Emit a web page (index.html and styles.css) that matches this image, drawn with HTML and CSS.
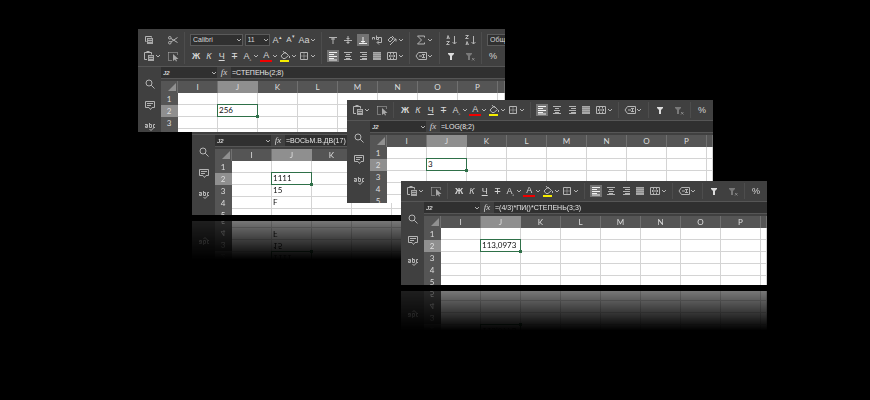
FILE: index.html
```html
<!DOCTYPE html>
<html lang="ru">
<head>
<meta charset="utf-8">
<title>Формулы</title>
<link rel="stylesheet" href="styles.css">
</head>
<body>
<svg class="sprite" aria-hidden="true">
  <symbol id="copy" viewBox="0 0 12 12"><path d="M3.500 7.500h-1v-5h6v1"/><path class="solid" d="M4 4h6v6H4z"/><path class="cut" d="M5 5.500h4M5 7.500h4"/></symbol>
  <symbol id="paste" viewBox="0 0 12 12"><path d="M4 9.500H1.500v-7h7v2M3.500 1.500h3"/><path class="solid" d="M5 5h6v6H5z"/><path class="cut" d="M6 6.500h4M6 8.500h4"/></symbol>
  <symbol id="scissors" viewBox="0 0 12 12"><path d="M4 4.500l6.500 4M4 8l6.500-4.500"/><circle cx="2.800" cy="3.800" r="1.300"/><circle cx="2.800" cy="8.700" r="1.300"/></symbol>
  <symbol id="pick" viewBox="0 0 12 12"><path class="dash" d="M1.500 2.500h9v3M1.500 2.500v8h4"/><path class="solid" d="M6 4v7l2-1.500 1 2 1-.5-1-2h2.500z"/></symbol>
  <symbol id="chevron" viewBox="0 0 6 6"><path d="M1 2l2 2 2-2"/></symbol>
  <symbol id="fill" viewBox="0 0 12 12"><path d="M2 6l4-4 3.500 3.500-3.500 3H4zM4 1l2.500 3M10.500 6v2"/><path class="yellow" d="M1 10h9v2H1z"/></symbol>
  <symbol id="borders" viewBox="0 0 12 12"><path d="M2.500 2.500h7v7h-7z"/><path class="dim" d="M6 3v6M3 6h6"/></symbol>
  <symbol id="top" viewBox="0 0 12 12"><path d="M2 3.500h8M4 5h4M6 10V4" /></symbol>
  <symbol id="middle" viewBox="0 0 12 12"><path d="M2 6.500h8M6 2v8M4.500 4.500h3M4.500 8.500h3"/></symbol>
  <symbol id="bottom" viewBox="0 0 12 12"><path d="M2 9.500h8M6 3v6M4 7.500h4"/></symbol>
  <symbol id="wrap" viewBox="0 0 12 12"><path d="M1.500 5.500v-2h2v2M5.500 1.500v4h2v-2h-2M7.500 3.500h3v5h-4M8 6.500l-2 2 2 2"/></symbol>
  <symbol id="turn" viewBox="0 0 12 12"><path d="M2 6l3-3 2 2-3 3zM6 2l2 2M4 11l6-6M7.500 5H10v2.500"/></symbol>
  <symbol id="left" viewBox="0 0 12 12"><path d="M2 2.500h8M2 4.500h5M2 6.500h8M2 8.500h5M2 10h8"/></symbol>
  <symbol id="center" viewBox="0 0 12 12"><path d="M2 2.500h8M4 4.500h4M3 6.500h6M4 8.500h4M2 9.500h8"/></symbol>
  <symbol id="right" viewBox="0 0 12 12"><path d="M3 2.500h7M5 4.500h5M3 6.500h7M5 8.500h5M3 9.500h7"/></symbol>
  <symbol id="justify" viewBox="0 0 12 12"><path class="solid" d="M2 2h8v8H2z"/><path class="faint" d="M2 3.500h8M2 5.500h8M2 7.500h8"/></symbol>
  <symbol id="merge" viewBox="0 0 12 12"><path d="M1.500 2.500h9v7h-9zM4.500 2v2M7.500 2v2M4.500 8v2M7.500 8v2M3 6h6M4.500 4.500L3 6l1.500 1.500M7.500 4.500L9 6 7.500 7.500"/></symbol>
  <symbol id="sum" viewBox="0 0 12 12"><path d="M9.500 3.500v-1.500H2.500l4 4-4 4h7V8.500"/></symbol>
  <symbol id="tag" viewBox="0 0 12 12"><path d="M3.500 2.500h8v7h-8L1 6zM4 6h3M7 4.500h3M8.500 4.500v3M7 7.500h3"/></symbol>
  <symbol id="az" viewBox="0 0 12 12"><path d="M2 5l1-3.500L4.500 5M2 4h2M1.500 7.500h3l-3 3h3M9.500 2v8M7.500 8l2 2 2-2"/></symbol>
  <symbol id="za" viewBox="0 0 12 12"><path d="M1.500 1.500h3l-3 3h3M2 11l1-3.500L4.500 11M2 10h2M9.500 2v8M7.500 8l2 2 2-2"/></symbol>
  <symbol id="filter" viewBox="0 0 12 12"><path class="bright" d="M3 3h6v1L7 6v4H5V6L3 4z"/></symbol>
  <symbol id="unfilter" viewBox="0 0 12 12"><path class="solid dim" d="M2 3h6v1L6 6v4H4V6L2 4z"/><path class="dim" d="M8 8l2.500 2.500M10.500 8L8 10.500"/></symbol>
  <symbol id="search" viewBox="0 0 12 12"><circle cx="5" cy="5" r="3"/><path d="M7.200 7.200L10.500 10.500"/></symbol>
  <symbol id="comment" viewBox="0 0 12 12"><path d="M1.500 2.500h9v6H8l-1.500 2-1.500-2H1.500zM3 4.500h6M3 6.500h4"/></symbol>
  <symbol id="spell" viewBox="0 0 12 12"><path d="M1 4.500h2.500v3h-2v-1.500h2M5.500 3v4.500h2v-3h-2M11 4.500H9.500v3H11M5.500 9l1.500 1.500 3.500-3.500"/></symbol>
</svg>
<main class="stage" id="stage"></main>
<script src="app.js"></script>
</body>
</html>
```
FILE: styles.css
```css
* { box-sizing: border-box; }

body {
  margin: 0;
  background: #000;
  font: 7px/10px "Liberation Sans", Arial, sans-serif;
  color: #d6d6d6;
}

button, input, select {
  font: inherit;
  color: inherit;
  border: 0;
  border-radius: 0;
  margin: 0;
  padding: 0;
  background: none;
}

.sprite { position: absolute; width: 0; height: 0; }

.stage { position: relative; min-height: 100vh; overflow: hidden; }

.window {
  position: absolute;
  width: 42.1%;
  overflow: hidden;
  display: flex;
  flex-direction: column;
  background: #404040;
}
.power { left: 138px; top: 29px; height: 103px; width: 42.2%; }
.binary { left: 192px; top: 114px; height: 101px; }
.log { left: 347px; top: 100px; height: 103px; }
.sphere { left: 401px; top: 181px; height: 104px; }
.mirrored { -webkit-box-reflect: below 6px linear-gradient(transparent 62%, rgba(0, 0, 0, 0.47)); }

.icon {
  flex: none;
  width: 12px;
  height: 12px;
  fill: none;
  stroke: #b4b4b4;
  stroke-width: 1;
}
.chevron { width: 6px; height: 6px; }
.solid { fill: #a8a8a8; stroke: none; }
.bright { fill: #dcdcdc; stroke: none; }
.dim { opacity: 0.55; }
.faint { stroke: #8c8c8c; }
.cut { stroke: #606060; }
.dash { stroke-dasharray: 1 1; }
.yellow { fill: #f5ec00; stroke: none; }

.toolbar { flex: none; display: flex; padding: 2px 0; border-bottom: 1px solid #565656; }
.double { padding-top: 3px; }
.group { flex: none; padding: 0 5px; border-right: 1px solid #4d4d4d; }
.group:last-child { border: 0; }
.clipboard { width: 47px; }
.text { width: 137px; }
.align { width: 88px; }
.insert { width: 30px; }
.sort { width: 42px; }
.row { display: flex; align-items: center; justify-content: space-between; height: 16px; }

.tool { flex: none; display: flex; align-items: center; height: 12px; }
.tool.active { background: #737373; }
.tool.active .icon { stroke: #f0f0f0; }
.glyph { width: 12px; font-size: 9px; line-height: 12px; text-align: center; white-space: nowrap; }
.glyph sup, .glyph sub { font-size: 5px; line-height: 0; }
.bold { font-weight: bold; }
.italic { font-style: italic; }
.under { text-decoration: underline; }
.strike { text-decoration: line-through; }
.color { border-bottom: 2px solid #f00000; line-height: 10px; }
.small { font-size: 8px; }

.picker { display: grid; align-items: center; height: 12px; background: #303030; border: 1px solid #5a5a5a; }
.picker select { grid-area: 1 / 1; width: 100%; height: 10px; padding-left: 2px; appearance: none; }
.picker .chevron { grid-area: 1 / 1; justify-self: end; pointer-events: none; }
.family { width: 53px; }
.size { width: 25px; }
.format { width: 53px; }

.body { flex: 1; display: flex; min-height: 0; }
.side { flex: none; width: 23px; display: flex; flex-direction: column; align-items: center; gap: 9px; padding-top: 11px; }
.work { flex: 1; min-width: 0; }

.formula { display: flex; height: 12px; margin-bottom: 2px; border-bottom: 1px solid #565656; background: #303030; }
.name { display: flex; align-items: center; width: 56px; }
.name input { flex: 1; min-width: 0; padding-left: 2px; font-size: 6px; font-style: italic; font-weight: bold; }
.fx { width: 14px; background: #404040; font: italic 9px/11px "Liberation Serif", serif; text-align: center; }
.expression { flex: 1; min-width: 0; padding-left: 1px; color: #e6e6e6; }

.sheet {
  width: 100%;
  table-layout: fixed;
  border-collapse: separate;
  border-spacing: 0;
  background: #fff;
  color: #111;
  font: 8px/11px Lato, sans-serif;
}
.sheet th {
  height: 12px;
  padding: 0;
  font-weight: normal;
  color: #dedede;
  background: #555;
  border-right: 1px solid #707070;
}
.sheet tbody th { border-right-color: #555; }
.sheet th.current { background: #8f8f8f; border-color: #8f8f8f; }
.sheet .stub { width: 17px; }
.sheet .column { width: 40px; }
.corner { display: block; width: 8px; height: 8px; margin-left: 7px; background: #909090; clip-path: polygon(100% 0, 100% 100%, 0 100%); }
.sheet td {
  height: 12px;
  padding: 0 0 0 1px;
  border-right: 1px solid #d4d4d4;
  border-bottom: 1px solid #d4d4d4;
  white-space: nowrap;
}
.sheet td.selected { position: relative; }
.selected::before { content: ""; position: absolute; inset: -1px; border: 1px solid #2f7049; }
.selected::after { content: ""; position: absolute; right: -2px; bottom: -2px; width: 3px; height: 3px; background: #2f7049; }
```
FILE: app.js
```js
const windows = [
  { kind: "binary mirrored", formula: "=ВОСЬМ.В.ДВ(17)", values: ["1111", "15", "F"] },
  { kind: "power", formula: "=СТЕПЕНЬ(2;8)", values: ["256"], full: true },
  { kind: "log", formula: "=LOG(8;2)", values: ["3"] },
  { kind: "sphere mirrored", formula: "=(4/3)*ПИ()*СТЕПЕНЬ(3;3)", values: ["113,0973"] },
];
const columns = ["I", "J", "K", "L", "M", "N", "O", "P"];

const svg = (id, cls = "") => `<svg class="icon ${cls}" aria-hidden="true"><use href="#${id}"/></svg>`;
const chevron = svg("chevron", "chevron");
const tool = (id, label, menu, cls = "") =>
  `<button class="tool ${cls}" aria-label="${label}">${svg(id)}${menu ? chevron : ""}</button>`;
const glyph = (text, cls, label, menu) =>
  `<button class="tool" aria-label="${label}"><span class="glyph ${cls}">${text}</span>${menu ? chevron : ""}</button>`;
const picker = (cls, label, value) =>
  `<span class="picker ${cls}"><select aria-label="${label}"><option>${value}</option></select>${chevron}</span>`;

const groups = [
  ["clipboard",
    tool("copy", "Копировать") + tool("scissors", "Вырезать"),
    tool("paste", "Вставить", true) + tool("pick", "Выделить")],
  ["text",
    picker("family", "Шрифт", "Calibri") + picker("size", "Размер", "11") +
    glyph("A<sup>▴</sup>", "", "Крупнее") + glyph("A<sup>▾</sup>", "small", "Мельче") + glyph("Aa", "", "Регистр", true),
    glyph("Ж", "bold", "Полужирный") + glyph("К", "italic", "Курсив") + glyph("Ч", "under", "Подчёркнутый") +
    glyph("Т", "strike", "Зачёркнутый") + glyph("A<sub>▫</sub>", "", "Индекс", true) +
    glyph("A", "color", "Цвет шрифта", true) + tool("fill", "Заливка", true) + tool("borders", "Границы", true)],
  ["align",
    tool("top", "По верху") + tool("middle", "По середине") + tool("bottom", "По низу", false, "active") +
    tool("wrap", "Перенос") + tool("turn", "Ориентация", true),
    tool("left", "Влево", false, "active") + tool("center", "По центру") + tool("right", "Вправо") +
    tool("justify", "По ширине") + tool("merge", "Объединить", true)],
  ["insert", tool("sum", "Сумма", true), tool("tag", "Имена", true)],
  ["sort",
    tool("az", "По возрастанию") + tool("za", "По убыванию"),
    tool("filter", "Фильтр") + tool("unfilter", "Очистить фильтр")],
  ["number", picker("format", "Формат", "Общий"), glyph("%", "", "Процент")],
];

const toolbar = (full) => `<div class="toolbar ${full ? "double" : ""}">${groups.map(([name, upper, lower]) =>
  `<div class="group ${name}">${full ? `<div class="row">${upper}</div>` : ""}<div class="row">${lower}</div></div>`
).join("")}</div>`;

const sheet = (values) => `<table class="sheet"><thead><tr>
  <th class="stub"><span class="corner"></span></th>
  ${columns.map((c) => `<th class="column ${c === "J" ? "current" : ""}">${c}</th>`).join("")}<th></th></tr></thead>
  <tbody>${[1, 2, 3, 4, 5].map((n) => `<tr><th class="${n === 2 ? "current" : ""}">${n}</th>${
    columns.map((c) => `<td class="${c === "J" && n === 2 ? "selected" : ""}">${c === "J" ? values[n - 2] || "" : ""}</td>`).join("")
  }<td></td></tr>`).join("")}</tbody></table>`;

document.getElementById("stage").innerHTML = windows.map((w) => `<section class="window ${w.kind}">
  ${toolbar(w.full)}
  <div class="body">
    <nav class="side">${tool("search", "Поиск")}${tool("comment", "Комментарии")}${tool("spell", "Орфография")}</nav>
    <div class="work">
      <div class="formula">
        <label class="name"><input aria-label="Ячейка" value="J2">${chevron}</label>
        <span class="fx">fx</span>
        <input class="expression" aria-label="Формула" value="${w.formula}">
      </div>
      ${sheet(w.values)}
    </div>
  </div>
</section>`).join("");
```
